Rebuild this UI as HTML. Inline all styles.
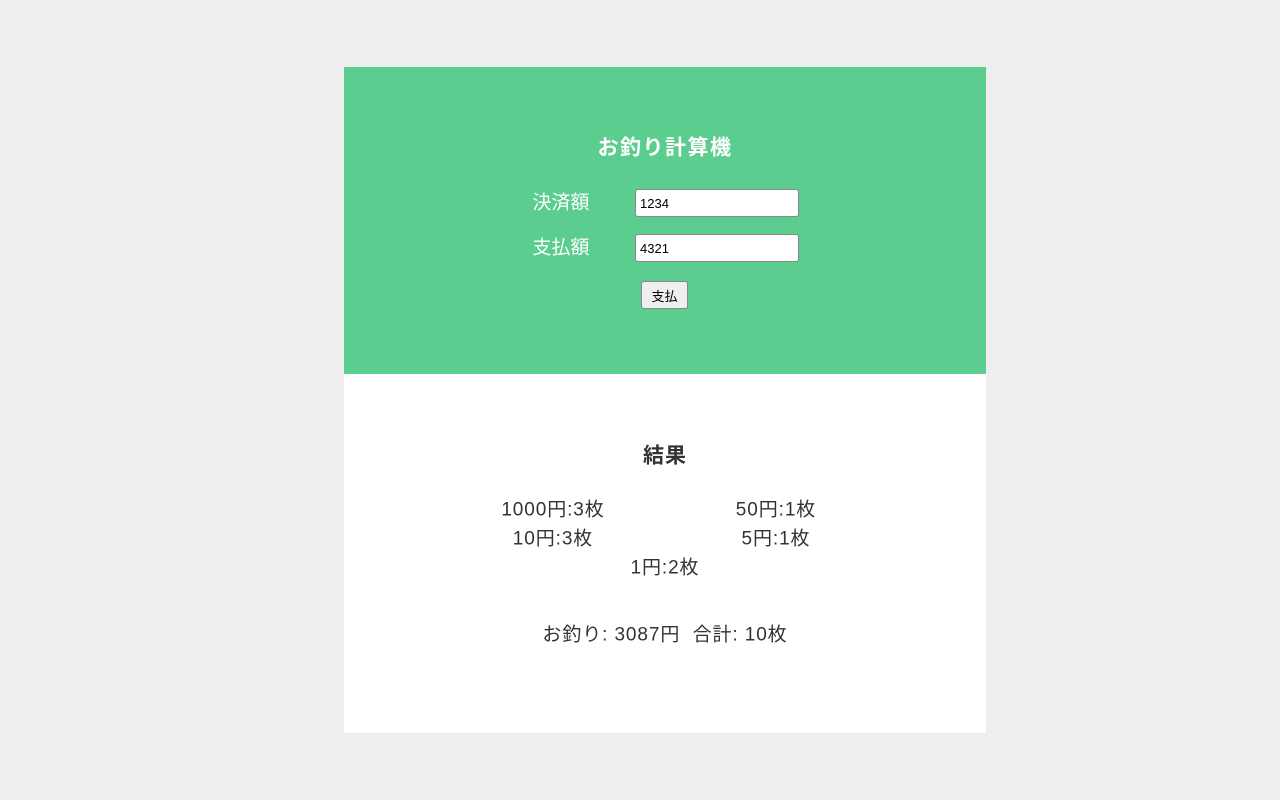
<!DOCTYPE html>
<html><head><meta charset="utf-8"><style>
body{margin:0;background:#eeeeee;font-family:"Liberation Sans","Noto Sans CJK JP",sans-serif;}
.g{position:absolute;left:344px;top:67px;width:642px;height:307px;background:#5bcd8f;}
.w{position:absolute;left:344px;top:374px;width:642px;height:359px;background:#fff;}
.t{position:absolute;white-space:nowrap;transform:translate(-50%,-50%);line-height:1;}
input{position:absolute;box-sizing:border-box;width:164px;height:28px;border:1px solid #888;border-radius:3px;font:13px "Liberation Sans",sans-serif;padding:2px 4px;background:#fff;}
button{position:absolute;left:641px;top:281px;width:47px;height:28px;box-sizing:border-box;border:1px solid #888;border-radius:3px;background:#efefef;font:13px "Liberation Sans","Noto Sans CJK JP",sans-serif;padding:0;}
.r{color:#333;font-size:19px;letter-spacing:0.9px;}
</style></head><body>
<div class="g"></div><div class="w"></div>
<div class="t" style="left:665px;top:148px;color:#fff;font-size:21px;font-weight:bold;letter-spacing:1.5px">お釣り計算機</div>
<div class="t" style="left:561px;top:203px;color:#fff;font-size:19px">決済額</div>
<div class="t" style="left:561px;top:248px;color:#fff;font-size:19px">支払額</div>
<input style="left:635px;top:189px" value="1234">
<input style="left:635px;top:234px" value="4321">
<button>支払</button>
<div class="t" style="left:665px;top:456px;color:#333;font-size:21px;font-weight:bold;letter-spacing:1px">結果</div>
<div class="t r" style="left:553px;top:510px">1000円:3枚</div>
<div class="t r" style="left:776px;top:510px">50円:1枚</div>
<div class="t r" style="left:553px;top:539px">10円:3枚</div>
<div class="t r" style="left:776px;top:539px">5円:1枚</div>
<div class="t r" style="left:665px;top:568px">1円:2枚</div>
<div class="t r" style="left:665px;top:635px">お釣り: 3087円&nbsp; 合計: 10枚</div>
</body></html>
